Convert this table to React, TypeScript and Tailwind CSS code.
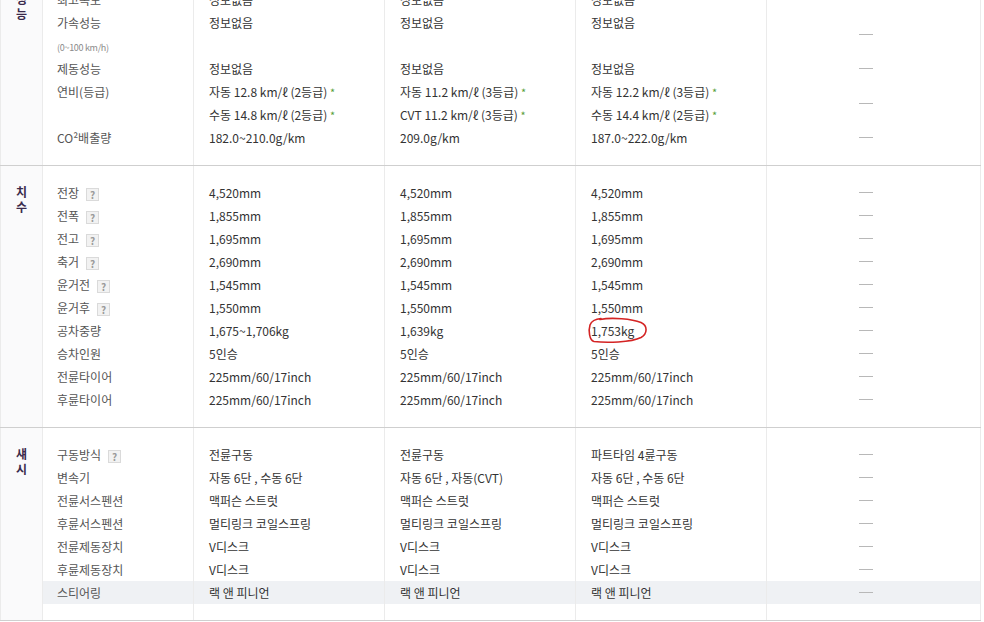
import React from 'react';

type Line = React.ReactNode;

interface SpecRow {
  label: Line[];
  values: Line[][];
  highlight?: boolean;
}

const Help = () => (
  <span className="ml-[7px] inline-flex h-[13px] w-[13px] items-center justify-center border border-[#dadada] bg-[#f2f2f2] align-middle text-[10px] font-bold leading-none text-[#9a9a9a]">
    ?
  </span>
);

const Fuel = ({ text }: { text: string }) => (
  <>
    {text} <span className="text-[11px] text-[#5a9e3a]">*</span>
  </>
);

const Sub = () => <span className="text-[9px] tracking-[-0.3px] text-[#8a8a8a]">(0~100 km/h)</span>;

// red hand-drawn mark around the weight value
const Circled = ({ children }: { children: React.ReactNode }) => (
  <span className="relative inline-block">
    {children}
    <svg className="pointer-events-none absolute left-[-5px] top-[-4px]" width="64" height="30" viewBox="0 0 64 30">
      <path
        d="M14 4.5 C26 2, 46 4, 55 7.5 C62 10.5, 61.5 19, 55 22.5 C45 27.5, 20 28, 8 26.5 C3 25, 2.5 15, 4 10 C5.5 6, 9 4, 15 3.5"
        fill="none"
        stroke="#d42424"
        strokeWidth="1.6"
        strokeLinecap="round"
      />
    </svg>
  </span>
);

const same = (v: Line): Line[][] => [[v], [v], [v]];

const performance: SpecRow[] = [
  { label: ['최고속도'], values: same('정보없음') },
  { label: ['가속성능', <Sub />], values: same('정보없음') },
  { label: ['제동성능'], values: same('정보없음') },
  {
    label: ['연비(등급)'],
    values: [
      [<Fuel text="자동 12.8 km/ℓ (2등급)" />, <Fuel text="수동 14.8 km/ℓ (2등급)" />],
      [<Fuel text="자동 11.2 km/ℓ (3등급)" />, <Fuel text="CVT 11.2 km/ℓ (3등급)" />],
      [<Fuel text="자동 12.2 km/ℓ (3등급)" />, <Fuel text="수동 14.4 km/ℓ (2등급)" />],
    ],
  },
  { label: ['CO²배출량'], values: [['182.0~210.0g/km'], ['209.0g/km'], ['187.0~222.0g/km']] },
];

const dimensions: SpecRow[] = [
  { label: [<>전장<Help /></>], values: same('4,520mm') },
  { label: [<>전폭<Help /></>], values: same('1,855mm') },
  { label: [<>전고<Help /></>], values: same('1,695mm') },
  { label: [<>축거<Help /></>], values: same('2,690mm') },
  { label: [<>윤거전<Help /></>], values: same('1,545mm') },
  { label: [<>윤거후<Help /></>], values: same('1,550mm') },
  { label: ['공차중량'], values: [['1,675~1,706kg'], ['1,639kg'], [<Circled>1,753kg</Circled>]] },
  { label: ['승차인원'], values: same('5인승') },
  { label: ['전륜타이어'], values: same('225mm/60/17inch') },
  { label: ['후륜타이어'], values: same('225mm/60/17inch') },
];

const chassis: SpecRow[] = [
  { label: [<>구동방식<Help /></>], values: [['전륜구동'], ['전륜구동'], ['파트타임 4륜구동']] },
  { label: ['변속기'], values: [['자동 6단 , 수동 6단'], ['자동 6단 , 자동(CVT)'], ['자동 6단 , 수동 6단']] },
  { label: ['전륜서스펜션'], values: same('맥퍼슨 스트럿') },
  { label: ['후륜서스펜션'], values: same('멀티링크 코일스프링') },
  { label: ['전륜제동장치'], values: same('V디스크') },
  { label: ['후륜제동장치'], values: same('V디스크') },
  { label: ['스티어링'], values: same('랙 앤 피니언'), highlight: true },
];

function Spacer({ h }: { h: string }) {
  return (
    <>
      {[0, 1, 2, 3, 4].map(i => (
        <div key={i} className={`${h} border-r border-[#ebebeb]`} />
      ))}
    </>
  );
}

function Row({ row }: { row: SpecRow }) {
  const n = Math.max(row.label.length, ...row.values.map(v => v.length));
  const bg = row.highlight ? 'bg-[#eff1f4]' : '';
  const lines = (items: Line[]) =>
    Array.from({ length: n }).map((_, i) => (
      <div key={i} className="h-[23px] whitespace-nowrap leading-[23px]">
        {items[i] ?? null}
      </div>
    ));

  return (
    <>
      <div className={`border-r border-[#ebebeb] pl-[14px] text-[#555] ${bg}`}>{lines(row.label)}</div>
      {row.values.map((v, i) => (
        <div key={i} className={`border-r border-[#ebebeb] pl-[15px] text-[#333] ${bg}`}>
          {lines(v)}
        </div>
      ))}
      <div className={`flex items-center border-r border-[#ebebeb] pl-[92px] ${bg}`}>
        <span className="block h-px w-[14px] bg-[#b8b8b8]" />
      </div>
    </>
  );
}

function Section({ title, rows }: { title: string; rows: SpecRow[] }) {
  return (
    <div className="flex w-[981px] border-b border-[#cfcfcf]">
      <div className="w-[43px] shrink-0 border-l border-r border-[#ebebeb] bg-[#fafafb] pt-[18px] text-center text-[12px] font-bold leading-[15px] text-[#3b2a4b]">
        {title.split('').map((c, i) => (
          <div key={i}>{c}</div>
        ))}
      </div>
      <div className="grid grid-cols-[151px_191px_191px_191px_214px]">
        <Spacer h="h-[15px]" />
        {rows.map((r, i) => (
          <Row key={i} row={r} />
        ))}
        <Spacer h="h-[16px]" />
      </div>
    </div>
  );
}

export default function App() {
  return (
    <div className="h-[622px] w-[984px] overflow-hidden bg-white font-['Noto_Sans_CJK_KR',sans-serif] text-[12px]">
      <div className="mt-[-27px]">
        <Section title="성능" rows={performance} />
        <Section title="치수" rows={dimensions} />
        <Section title="섀시" rows={chassis} />
      </div>
    </div>
  );
}
